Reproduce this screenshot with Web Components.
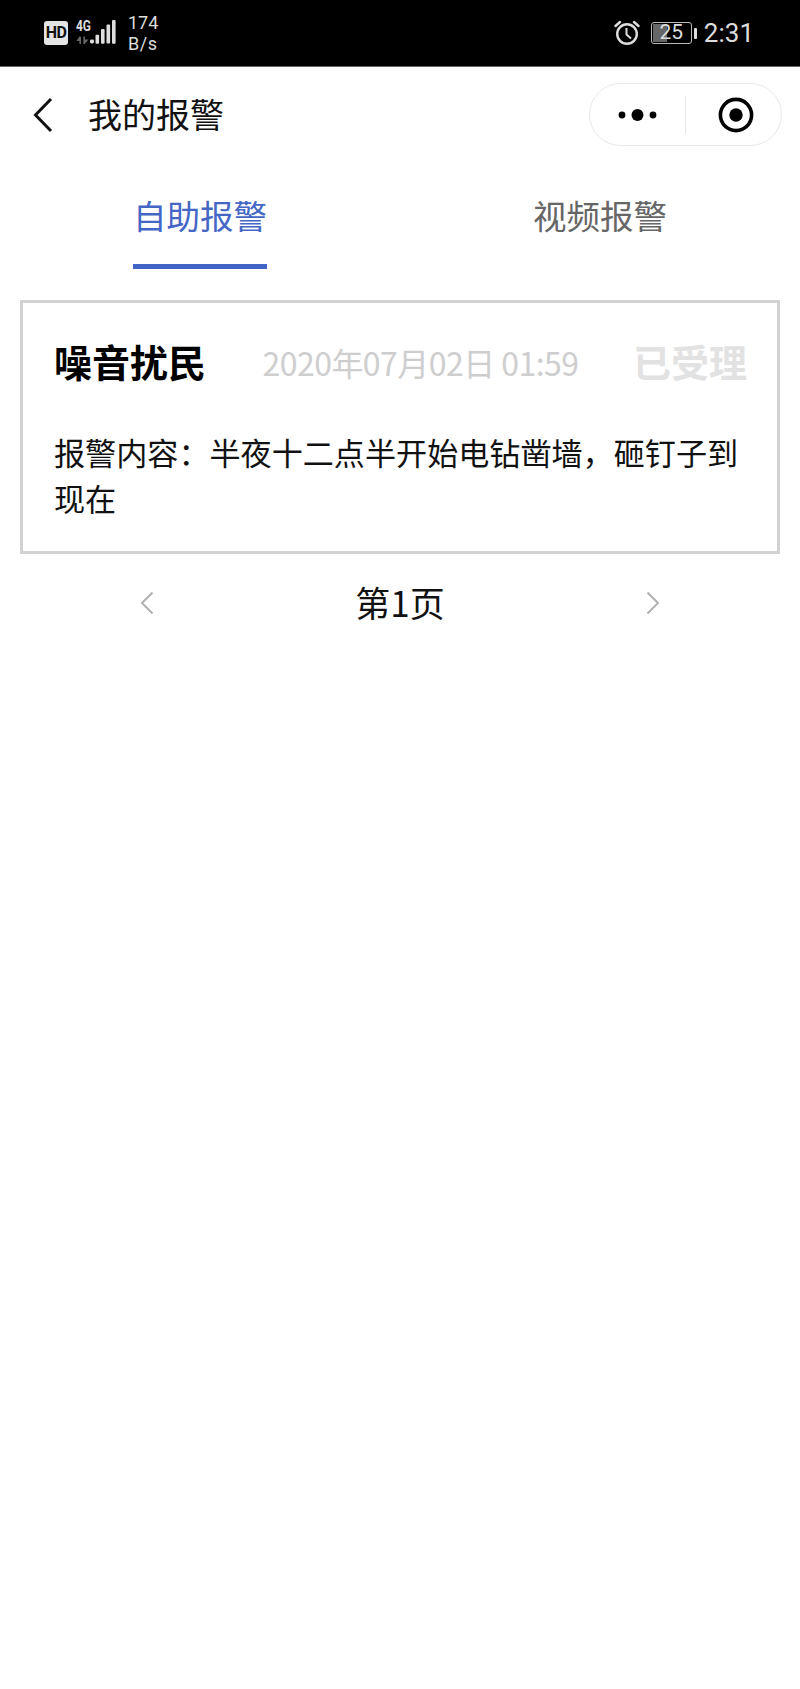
<!DOCTYPE html>
<html lang="zh">
<head>
<meta charset="utf-8">
<title>我的报警</title>
<style>
  html, body { margin: 0; padding: 0; background: #fff; }
  body { font-family: "Noto Sans CJK SC", "Noto Sans", sans-serif; width: 800px; height: 1689px; overflow: hidden; }
</style>
</head>
<body>
<status-bar></status-bar>
<nav-bar>我的报警</nav-bar>
<tab-bar></tab-bar>
<alarm-card kind="噪音扰民" time="2020年07月02日 01:59" state="已受理">报警内容：半夜十二点半开始电钻凿墙，砸钉子到现在</alarm-card>
<page-row>第1页</page-row>

<script>
class StatusBar extends HTMLElement {
    constructor() {
        super();
        this.attachShadow({ mode: 'open' });
        this.shadowRoot.innerHTML = `
            <style>
                :host {
                    display: flex;
                    align-items: center;
                    box-sizing: border-box;
                    height: 67px;
                    padding: 0 46px 0 44px;
                    background: #000;
                    border-bottom: 1px solid #666;
                    color: #ddd;
                    font-family: Roboto, "Liberation Sans", sans-serif;
                }
                .hd {
                    width: 24px;
                    height: 24px;
                    border-radius: 3px;
                    background: #e4e4e4;
                    color: #111;
                    font-size: 16px;
                    font-weight: 700;
                    line-height: 24px;
                    text-align: center;
                    letter-spacing: -0.5px;
                }
                .net { margin-left: 8px; display: block; }
                .speed {
                    margin-left: 11px;
                    font-size: 18px;
                    line-height: 21px;
                }
                .speed div:last-child { letter-spacing: 0.6px; }
                .gap { flex: 1; }
                .batt {
                    position: relative;
                    box-sizing: border-box;
                    width: 41px;
                    height: 22px;
                    margin-left: 11px;
                    border: 1.5px solid #bbb;
                    border-radius: 3px;
                    font-size: 21px;
                    line-height: 19px;
                    text-align: center;
                }
                .batt i {
                    position: absolute;
                    left: 1px; top: 1px; bottom: 1px;
                    width: 14px;
                    background: #666;
                }
                .batt span { position: relative; }
                .nub {
                    width: 3px;
                    height: 11px;
                    margin-left: 2px;
                    background: #ddd;
                    border-radius: 1px;
                }
                .time {
                    margin-left: 7px;
                    font-size: 26px;
                }
            </style>
            <div class="hd">HD</div>
            <svg class="net" width="41" height="34" viewBox="0 -4 41 34">
                <text x="0" y="11" font-family="Roboto, sans-serif" font-weight="700" font-size="14" fill="#ddd" textLength="15" lengthAdjust="spacingAndGlyphs">4G</text>
                <g fill="#666">
                    <rect x="3.4" y="17" width="1.6" height="7"/>
                    <path d="M4.2 15.5 L0.5 21 H4.2Z"/>
                    <rect x="7.4" y="16.5" width="1.6" height="7.5"/>
                    <path d="M8.2 24.5 L12.5 19.5 H8.2Z"/>
                </g>
                <g fill="#ddd">
                    <rect x="14" y="19.5" width="4" height="4" rx="1.4"/>
                    <rect x="19.5" y="14.7" width="3.6" height="9" rx="1"/>
                    <rect x="25" y="9" width="3.6" height="14.7" rx="1"/>
                    <rect x="30.5" y="4.6" width="3.6" height="19" rx="1"/>
                    <rect x="36" y="0" width="3.6" height="23.7" rx="1"/>
                </g>
            </svg>
            <div class="speed"><div>174</div><div>B/s</div></div>
            <div class="gap"></div>
            <svg width="26" height="26" viewBox="0 0 26 26" fill="none" stroke="#ddd" stroke-width="2.4">
                <circle cx="13" cy="14" r="9.8"/>
                <path d="M12.5 8 V14.5 L17 18.5" stroke-width="2"/>
                <path d="M1.5 6 L6 2 M24.5 6 L20 2" stroke-linecap="round"/>
            </svg>
            <div class="batt"><i></i><span>25</span></div>
            <div class="nub"></div>
            <div class="time">2:31</div>
        `;
    }
}
customElements.define('status-bar', StatusBar);

class NavBar extends HTMLElement {
    constructor() {
        super();
        this.attachShadow({ mode: 'open' });
        this.shadowRoot.innerHTML = `
            <style>
                :host {
                    display: flex;
                    align-items: center;
                    height: 95px;
                    padding: 0 18px 0 32px;
                    color: #111;
                }
                .back { display: block; margin-right: 34px; }
                .title {
                    flex: 1;
                    font-size: 34px;
                    line-height: 46px;
                    margin-top: -2px;
                }
                .pill {
                    display: flex;
                    align-items: center;
                    box-sizing: border-box;
                    width: 193px;
                    height: 63px;
                    border: 1.5px solid #e8e8e8;
                    border-radius: 32px;
                    background: #fff;
                }
                .part {
                    display: flex;
                    justify-content: center;
                    align-items: center;
                    width: 95px;
                }
                .part.right { flex: 1; padding-left: 4px; }
                .sep { width: 1px; height: 38px; background: #e6e6e6; }
            </style>
            <svg class="back" width="22" height="36" viewBox="0 0 22 36" fill="none" stroke="#111" stroke-width="3">
                <path d="M19 2 L3.5 18 L19 34"/>
            </svg>
            <div class="title"><slot></slot></div>
            <div class="pill">
                <div class="part">
                    <svg width="39" height="14" viewBox="0 0 39 14" fill="#000">
                        <circle cx="4" cy="7" r="3.4"/>
                        <circle cx="19.5" cy="7" r="6"/>
                        <circle cx="35" cy="7" r="3.4"/>
                    </svg>
                </div>
                <div class="sep"></div>
                <div class="part right">
                    <svg width="36" height="36" viewBox="0 0 36 36">
                        <circle cx="18" cy="18" r="15.6" fill="none" stroke="#000" stroke-width="3.6"/>
                        <circle cx="18" cy="18" r="6.7" fill="#000"/>
                    </svg>
                </div>
            </div>
        `;
    }
}
customElements.define('nav-bar', NavBar);

class TabBar extends HTMLElement {
    constructor() {
        super();
        this.attachShadow({ mode: 'open' });
        this.shadowRoot.innerHTML = `
            <style>
                :host {
                    display: grid;
                    grid-template-columns: 400px 400px;
                    height: 121px;
                    box-sizing: border-box;
                    padding-top: 28px;
                }
                .tab {
                    display: flex;
                    flex-direction: column;
                    align-items: center;
                    font-size: 33.5px;
                    line-height: 50px;
                    color: #666;
                }
                .tab div { width: 134px; text-align: center; white-space: nowrap; }
                .on { color: #4467c6; }
                .bar {
                    height: 5px;
                    margin-top: 24px;
                    background: #4264c6;
                }
            </style>
            <div class="tab on">
                <div>自助报警</div>
                <div class="bar"></div>
            </div>
            <div class="tab">
                <div>视频报警</div>
            </div>
        `;
    }
}
customElements.define('tab-bar', TabBar);

class AlarmCard extends HTMLElement {
    constructor() {
        super();
        this.attachShadow({ mode: 'open' });
        this.shadowRoot.innerHTML = `
            <style>
                :host {
                    display: block;
                    box-sizing: border-box;
                    width: 760px;
                    height: 254px;
                    margin: 17px 0 0 20px;
                    padding: 31px 30px 0 31px;
                    border: 3px solid #d2d2d2;
                    background: #fff;
                }
                .head {
                    display: flex;
                    align-items: center;
                    justify-content: space-between;
                    height: 56px;
                }
                .kind { font-size: 38px; font-weight: 700; color: #000; margin-top: -3px; }
                .time { font-size: 32px; color: #cecece; letter-spacing: -0.55px; margin-left: 2px; }
                .state { font-size: 38px; font-weight: 700; color: #e2e2e2; margin-top: -3px; }
                .body {
                    margin-top: 39px;
                    font-size: 31.1px;
                    line-height: 46px;
                    color: #111;
                }
            </style>
            <div class="head">
                <div class="kind">${this.getAttribute('kind')}</div>
                <div class="time">${this.getAttribute('time')}</div>
                <div class="state">${this.getAttribute('state')}</div>
            </div>
            <div class="body"><slot></slot></div>
        `;
    }
}
customElements.define('alarm-card', AlarmCard);

class PageRow extends HTMLElement {
    constructor() {
        super();
        this.attachShadow({ mode: 'open' });
        this.shadowRoot.innerHTML = `
            <style>
                :host {
                    display: flex;
                    align-items: center;
                    justify-content: space-between;
                    box-sizing: border-box;
                    width: 800px;
                    height: 94px;
                    padding: 0 140px;
                    color: #111;
                    font-size: 35px;
                }
                svg { display: block; margin-top: 4px; }
            </style>
            <svg width="14" height="24" viewBox="0 0 14 24" fill="none" stroke="#b0b0b0" stroke-width="2"><path d="M12.5 1.5 L2 12 L12.5 22.5"/></svg>
            <div><slot></slot></div>
            <svg width="14" height="24" viewBox="0 0 14 24" fill="none" stroke="#b0b0b0" stroke-width="2"><path d="M1.5 1.5 L12 12 L1.5 22.5"/></svg>
        `;
    }
}
customElements.define('page-row', PageRow);
</script>
</body>
</html>
